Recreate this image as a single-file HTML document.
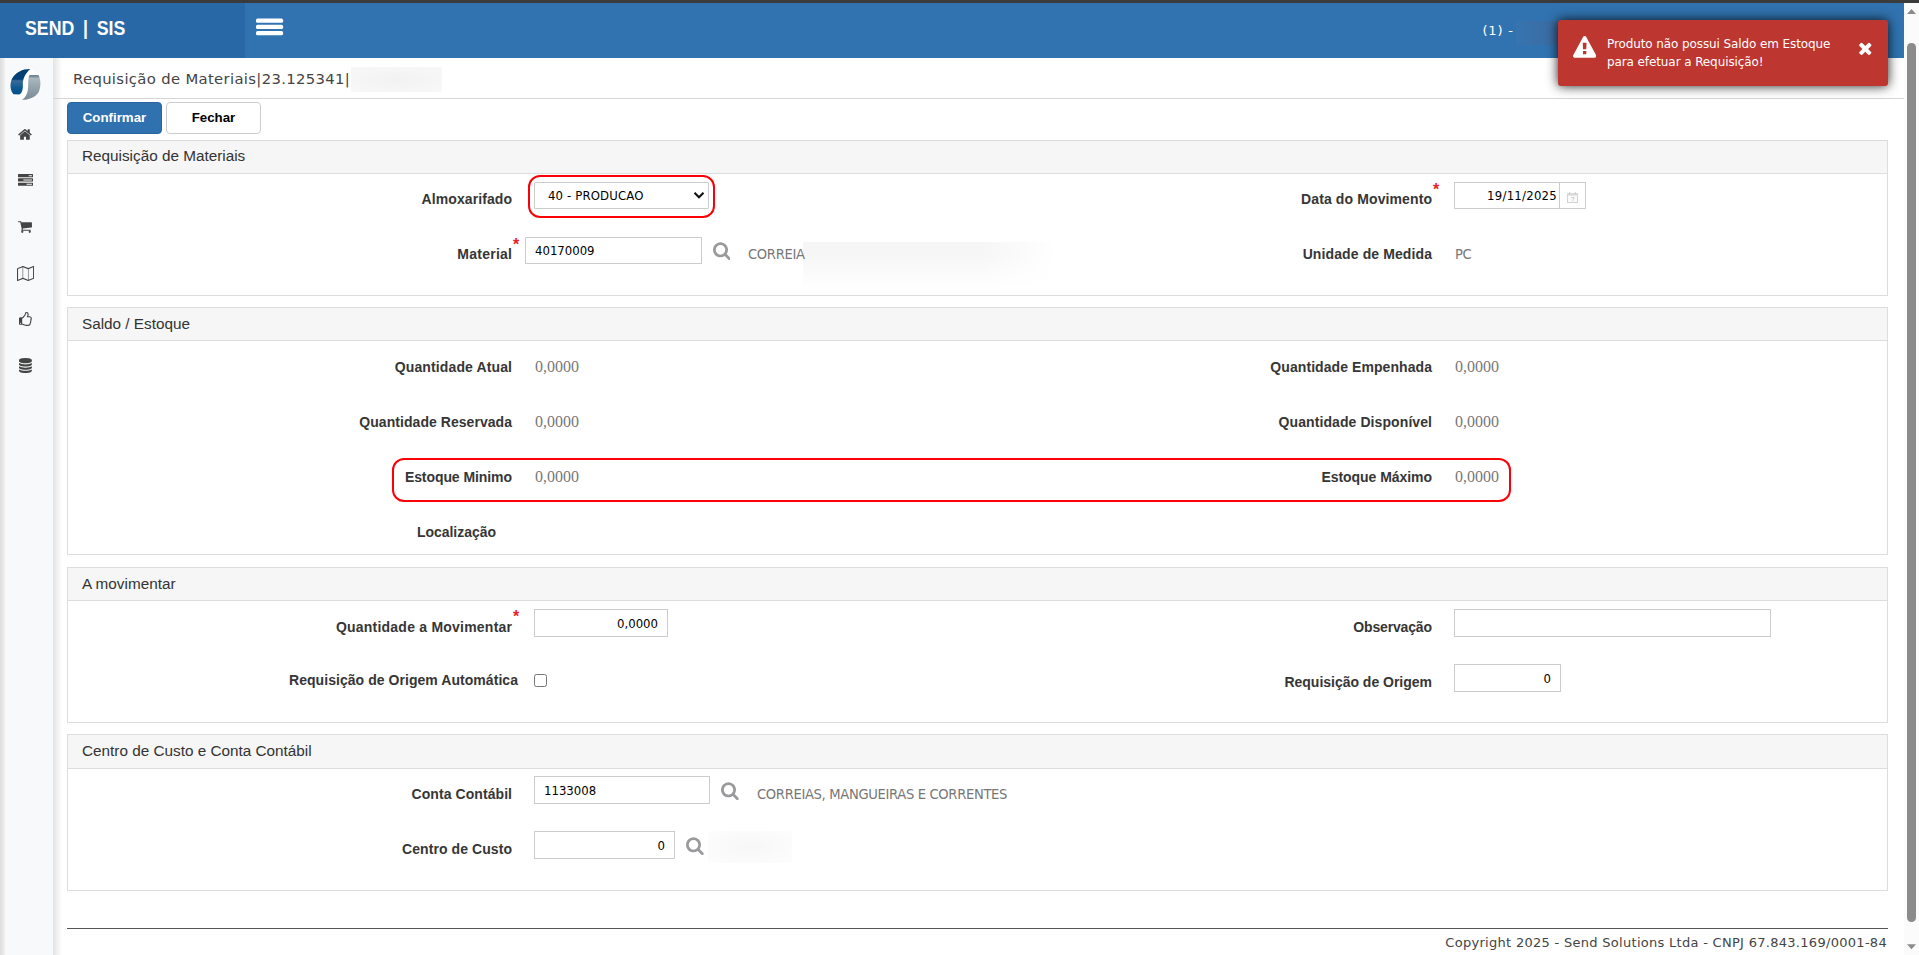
<!DOCTYPE html>
<html lang="pt-BR">
<head>
<meta charset="utf-8">
<title>SEND | SIS - Requisição de Materiais</title>
<style>
*{box-sizing:border-box;margin:0;padding:0}
html,body{width:1919px;height:955px;overflow:hidden;background:#fff;font-family:"Liberation Sans",sans-serif}
body{position:relative}
.abs{position:absolute}
#topbar{left:0;top:0;width:1919px;height:3px;background:#3b3b3b}
#hdr{left:0;top:3px;width:1904px;height:55px;background:#3173b0}
#hdr-left{left:0;top:3px;width:245px;height:55px;background:#2868a6}
#brand{left:24.5px;top:12.6px;color:#fff;font:bold 21px/30px "Liberation Sans",sans-serif;word-spacing:4.5px;white-space:nowrap;transform-origin:0 50%;transform:scaleX(.845)}
.hb{left:256px;width:27px;height:4px;background:#fff;border-radius:1px}
#user{left:1482.5px;top:22px;color:#fff;font:13px/18px "DejaVu Sans",sans-serif;letter-spacing:.8px;white-space:nowrap}
#side-shadow{left:0;top:58px;width:5px;height:897px;background:linear-gradient(90deg,#dcdcdc,#f0f0f0)}
#side{left:5px;top:58px;width:48px;height:897px;background:#f8f9fa}
#side-r{left:53px;top:58px;width:9px;height:897px;background:linear-gradient(90deg,rgba(0,0,0,.11),rgba(0,0,0,0))}
#title{left:73px;top:68px;color:#444;font:14.8px/22px "DejaVu Sans",sans-serif;letter-spacing:.345px;white-space:nowrap;transform-origin:0 50%}
#title-line{left:53px;top:98px;width:1851px;height:1px;background:#d6d6d6}
.btn{top:102px;height:32px;border-radius:4px;font:bold 13.3px/29px "Liberation Sans",sans-serif;text-align:center}
#b1{left:67px;width:95px;background:#3071b0;border:1px solid #2b66a0;color:#fff}
#b2{left:166px;width:95px;background:#fff;border:1px solid #ccc;color:#000}
.panel{left:67px;width:1821px;border:1px solid #ddd;background:#fff}
.ph{left:0;top:0;width:100%;height:33px;background:#f6f6f6;border-bottom:1px solid #ddd;color:#333;font:15.3px/30px "Liberation Sans",sans-serif;padding-left:14px;position:absolute}
.lbl{color:#363636;font:bold 14px/20px "Liberation Sans",sans-serif;white-space:nowrap;text-align:right;transform-origin:100% 50%}
.val{color:#777;font:16px/20px "Liberation Serif",serif;white-space:nowrap}
.txt{z-index:1;color:#777;letter-spacing:-.33px;font:14.6px/20px "DejaVu Sans Condensed","DejaVu Sans",sans-serif;font-stretch:condensed;white-space:nowrap;transform-origin:0 50%}
.inp{background:#fff;border:1px solid #ccc;color:#000;font:13px/28px "DejaVu Sans Condensed","DejaVu Sans",sans-serif;font-stretch:condensed;white-space:nowrap;padding:0 9px;height:28px}
.inp.r{text-align:right}
.req{color:#e8202a;font:bold 16px/16px "Liberation Sans",sans-serif}
.hl{border:2.4px solid #fb0007;border-radius:12px}
.blur{background:linear-gradient(90deg,rgba(255,255,255,0) 70%,#fff 100%),linear-gradient(180deg,#f6f6f6 30%,#fff 100%)}
#foot-line{left:67px;top:928px;width:1821px;height:1px;background:#555}
#foot{right:32px;top:934px;color:#444;font:13px/18px "DejaVu Sans",sans-serif;letter-spacing:.29px;white-space:nowrap;transform-origin:100% 50%}
#sb{left:1904px;top:3px;width:15px;height:952px;background:#fbfbfb}
#sb-thumb{left:1907px;top:43px;width:8.6px;height:878.6px;background:#8b8b8b;border-radius:4.3px}
#toast{left:1558px;top:20px;width:330px;height:65.5px;background:#bd362f;border-radius:3px;box-shadow:0 0 12px rgba(0,0,0,.88)}
#toast-msg{left:1607px;top:36px;color:#fff;font:12px/17.5px "DejaVu Sans",sans-serif;letter-spacing:-.1px;white-space:nowrap;transform-origin:0 50%}
</style>
</head>
<body>
<div id="topbar" class="abs"></div>
<div id="hdr" class="abs"></div>
<div id="hdr-left" class="abs"></div>
<div id="brand" class="abs">SEND | SIS</div>
<svg class="abs" style="left:250px;top:12px" width="40" height="30" viewBox="0 0 40 30"><g fill="#fff"><rect x="6" y="6.6" width="27.1" height="4.2" rx="1.6"/><rect x="6" y="12.85" width="27.1" height="4.2" rx="1.6"/><rect x="6" y="19.1" width="27.1" height="4.2" rx="1.6"/></g></svg>
<div id="user" class="abs">(1) -</div>
<div class="abs" style="left:1516px;top:21px;width:42px;height:24px;background:linear-gradient(90deg,#3675b0,#3a6fa8 50%,#3b6ba1)"></div>

<div id="side-shadow" class="abs"></div>
<div id="side" class="abs"></div>
<div id="side-r" class="abs"></div>

<svg class="abs" style="left:0;top:58px" width="60" height="60" viewBox="0 0 955 955">
<defs>
<linearGradient id="lgb" x1="0" y1="0" x2="0" y2="1"><stop offset="0" stop-color="#003c72"/><stop offset=".4" stop-color="#02437a"/><stop offset=".46" stop-color="#3b6a9b"/><stop offset=".75" stop-color="#0d5990"/><stop offset="1" stop-color="#06508a"/></linearGradient>
<linearGradient id="lgg" x1="0" y1="0" x2="0" y2="1"><stop offset="0" stop-color="#72848f"/><stop offset=".07" stop-color="#7d8e98"/><stop offset=".12" stop-color="#aab7be"/><stop offset=".5" stop-color="#95a4ac"/><stop offset="1" stop-color="#788a95"/></linearGradient>
</defs>
<circle cx="405" cy="420" r="252" fill="#fff"/>
<path fill="url(#lgb)" d="M480 176 C380 170 250 220 190 330 C150 420 165 520 215 578 L305 582 C350 560 368 500 364 420 C360 340 400 250 480 176Z"/>
<path fill="url(#lgg)" d="M470 272 L612 272 C650 340 660 450 615 545 C560 630 450 668 348 666 C420 620 446 540 448 440 C448 370 450 310 470 272Z"/>
</svg>
<svg class="abs" style="left:18.39px;top:127.14px" width="13.93" height="15" viewBox="0 -1536 1664 1792"><path transform="scale(1,-1)" fill="#444" d="M1408 544V64Q1408 38 1389.0 19.0Q1370 0 1344 0H960V384H704V0H320Q294 0 275.0 19.0Q256 38 256 64V544Q256 545 256.5 547.0Q257 549 257 550L832 1024L1407 550Q1408 548 1408 544ZM1631 613 1569 539Q1561 530 1548 528H1545Q1532 528 1524 535L832 1112L140 535Q128 527 116 528Q103 530 95 539L33 613Q25 623 26.0 636.5Q27 650 37 658L756 1257Q788 1283 832.0 1283.0Q876 1283 908 1257L1152 1053V1248Q1152 1262 1161.0 1271.0Q1170 1280 1184 1280H1376Q1390 1280 1399.0 1271.0Q1408 1262 1408 1248V840L1627 658Q1637 650 1638.0 636.5Q1639 623 1631 613Z"/></svg>
<svg class="abs" style="left:17.85px;top:173.14px" width="15.00" height="15" viewBox="0 -1536 1792 1792"><path transform="scale(1,-1)" fill="#444" d="M1024 128H1664V256H1024ZM640 640H1664V768H640ZM1280 1152H1664V1280H1280ZM1792 320V64Q1792 38 1773.0 19.0Q1754 0 1728 0H64Q38 0 19.0 19.0Q0 38 0 64V320Q0 346 19.0 365.0Q38 384 64 384H1728Q1754 384 1773.0 365.0Q1792 346 1792 320ZM1792 832V576Q1792 550 1773.0 531.0Q1754 512 1728 512H64Q38 512 19.0 531.0Q0 550 0 576V832Q0 858 19.0 877.0Q38 896 64 896H1728Q1754 896 1773.0 877.0Q1792 858 1792 832ZM1792 1344V1088Q1792 1062 1773.0 1043.0Q1754 1024 1728 1024H64Q38 1024 19.0 1043.0Q0 1062 0 1088V1344Q0 1370 19.0 1389.0Q38 1408 64 1408H1728Q1754 1408 1773.0 1389.0Q1792 1370 1792 1344Z"/></svg>
<svg class="abs" style="left:18.39px;top:219.14px" width="13.93" height="15" viewBox="0 -1536 1664 1792"><path transform="scale(1,-1)" fill="#444" d="M602.0 90.0Q640 52 640.0 0.0Q640 -52 602.0 -90.0Q564 -128 512.0 -128.0Q460 -128 422.0 -90.0Q384 -52 384.0 0.0Q384 52 422.0 90.0Q460 128 512.0 128.0Q564 128 602.0 90.0ZM1498.0 90.0Q1536 52 1536.0 0.0Q1536 -52 1498.0 -90.0Q1460 -128 1408.0 -128.0Q1356 -128 1318.0 -90.0Q1280 -52 1280.0 0.0Q1280 52 1318.0 90.0Q1356 128 1408.0 128.0Q1460 128 1498.0 90.0ZM1664 1088V576Q1664 552 1647.5 533.5Q1631 515 1607 512L563 390Q576 330 576 320Q576 304 552 256H1472Q1498 256 1517.0 237.0Q1536 218 1536.0 192.0Q1536 166 1517.0 147.0Q1498 128 1472 128H448Q422 128 403.0 147.0Q384 166 384 192Q384 203 392.0 223.5Q400 244 408.0 259.5Q416 275 429.5 299.5Q443 324 445 329L268 1152H64Q38 1152 19.0 1171.0Q0 1190 0.0 1216.0Q0 1242 19.0 1261.0Q38 1280 64 1280H320Q336 1280 348.5 1273.5Q361 1267 368.0 1258.0Q375 1249 381.0 1233.5Q387 1218 389.0 1207.5Q391 1197 394.5 1178.0Q398 1159 399 1152H1600Q1626 1152 1645.0 1133.0Q1664 1114 1664 1088Z"/></svg>
<svg class="abs" style="left:16.78px;top:266.14px" width="17.14" height="15" viewBox="0 -1536 2048 1792"><path transform="scale(1,-1)" fill="#444" d="M2020 1525Q2048 1505 2048 1472V64Q2048 44 2037.0 28.0Q2026 12 2008 5L1368 -251Q1344 -262 1320 -251L704 -5L88 -251Q78 -256 64 -256Q45 -256 28 -245Q0 -225 0 -192V1216Q0 1236 11.0 1252.0Q22 1268 40 1275L680 1531Q704 1542 728 1531L1344 1285L1960 1531Q1992 1544 2020 1525ZM736 1390V120L1312 -110V1160ZM128 1173V-97L672 120V1390ZM1920 107V1377L1376 1160V-110Z"/></svg>
<svg class="abs" style="left:18.92px;top:312.14px" width="12.86" height="15" viewBox="0 -1536 1536 1792"><path transform="scale(1,-1)" fill="#444" d="M237.0 147.0Q256 166 256.0 192.0Q256 218 237.0 237.0Q218 256 192.0 256.0Q166 256 147.0 237.0Q128 218 128.0 192.0Q128 166 147.0 147.0Q166 128 192.0 128.0Q218 128 237.0 147.0ZM1408 768Q1408 819 1369.0 857.5Q1330 896 1280 896H928Q928 954 976.0 1055.5Q1024 1157 1024 1216Q1024 1314 992.0 1361.0Q960 1408 864 1408Q838 1382 826.0 1323.0Q814 1264 795.5 1197.5Q777 1131 736 1088Q714 1065 659 997Q655 992 636.0 967.0Q617 942 604.5 926.0Q592 910 570.0 883.5Q548 857 530.0 839.5Q512 822 491.5 804.0Q471 786 451.5 777.0Q432 768 416 768H384V128H416Q429 128 447.5 125.0Q466 122 480.5 118.5Q495 115 518.5 107.5Q542 100 553.5 96.0Q565 92 589.0 83.5Q613 75 618 73Q829 0 960 0H1081Q1273 0 1273 167Q1273 193 1268 223Q1298 239 1315.5 275.5Q1333 312 1333.0 349.0Q1333 386 1315 418Q1368 468 1368 537Q1368 562 1358.0 592.5Q1348 623 1333 640Q1365 641 1386.5 687.0Q1408 733 1408 768ZM1536 769Q1536 680 1487 606Q1496 573 1496 537Q1496 460 1458 393Q1461 372 1461 350Q1461 249 1401 172Q1402 33 1316.0 -47.5Q1230 -128 1089 -128H1053H960Q864 -128 770.5 -105.5Q677 -83 554 -40Q438 0 416 0H128Q75 0 37.5 37.5Q0 75 0 128V768Q0 821 37.5 858.5Q75 896 128 896H402Q438 920 539 1051Q597 1126 646 1179Q670 1204 681.5 1264.5Q693 1325 712.0 1391.0Q731 1457 774 1499Q813 1536 864 1536Q948 1536 1015.0 1503.5Q1082 1471 1117.0 1402.0Q1152 1333 1152 1216Q1152 1123 1104 1024H1280Q1384 1024 1460.0 948.0Q1536 872 1536 769Z"/></svg>
<svg class="abs" style="left:18.92px;top:358.3px" width="12.86" height="15" viewBox="0 -1536 1536 1792"><path transform="scale(1,-1)" fill="#444" d="M1536 938V768Q1536 699 1433.0 640.0Q1330 581 1153.0 546.5Q976 512 768.0 512.0Q560 512 383.0 546.5Q206 581 103.0 640.0Q0 699 0 768V938Q119 854 325.0 811.0Q531 768 768.0 768.0Q1005 768 1211.0 811.0Q1417 854 1536 938ZM1536 170V0Q1536 -69 1433.0 -128.0Q1330 -187 1153.0 -221.5Q976 -256 768.0 -256.0Q560 -256 383.0 -221.5Q206 -187 103.0 -128.0Q0 -69 0 0V170Q119 86 325.0 43.0Q531 0 768.0 0.0Q1005 0 1211.0 43.0Q1417 86 1536 170ZM1536 554V384Q1536 315 1433.0 256.0Q1330 197 1153.0 162.5Q976 128 768.0 128.0Q560 128 383.0 162.5Q206 197 103.0 256.0Q0 315 0 384V554Q119 470 325.0 427.0Q531 384 768.0 384.0Q1005 384 1211.0 427.0Q1417 470 1536 554ZM1536 1280V1152Q1536 1083 1433.0 1024.0Q1330 965 1153.0 930.5Q976 896 768.0 896.0Q560 896 383.0 930.5Q206 965 103.0 1024.0Q0 1083 0 1152V1280Q0 1349 103.0 1408.0Q206 1467 383.0 1501.5Q560 1536 768.0 1536.0Q976 1536 1153.0 1501.5Q1330 1467 1433.0 1408.0Q1536 1349 1536 1280Z"/></svg>
<div id="title" class="abs">Requisição de Materiais|23.125341|</div>
<div class="abs" style="left:351px;top:67px;width:91px;height:25px;background:radial-gradient(ellipse at center,#f2f2f2 0%,#f5f5f5 50%,#f8f8f8 100%)"></div>
<div id="title-line" class="abs"></div>
<div id="b1" class="abs btn">Confirmar</div>
<div id="b2" class="abs btn">Fechar</div>

<!-- PANELS -->
<div class="abs panel" style="top:140px;height:156px"><div class="ph">Requisição de Materiais</div></div>
<div class="abs panel" style="top:307px;height:248px"><div class="ph" style="line-height:32px">Saldo / Estoque</div></div>
<div class="abs panel" style="top:567px;height:156px"><div class="ph" style="line-height:32px">A movimentar</div></div>
<div class="abs panel" style="top:734px;height:157px"><div class="ph" style="line-height:32px;height:34px">Centro de Custo e Conta Contábil</div></div>


<!-- panel 1 -->
<div class="abs lbl" style="left:0;width:512.08px;top:189px;letter-spacing:0.083px">Almoxarifado</div>
<div class="abs hl" style="left:527.6px;top:175.4px;width:187px;height:42.6px"></div>
<div class="abs inp sel" style="left:534px;top:182px;width:175px;height:27px;border-radius:1px;padding-left:13px;line-height:25px;letter-spacing:.15px">40 - PRODUCAO</div>
<svg class="abs" style="left:693px;top:191px" width="12" height="9" viewBox="0 0 12 9"><path d="M1.5 1.8 L6 6.3 L10.5 1.8" fill="none" stroke="#111" stroke-width="2.1"/></svg>
<div class="abs lbl" style="left:0;width:512.26px;top:244px;letter-spacing:0.263px">Material</div>
<div class="abs req" style="left:513px;top:237px">*</div>
<div class="abs inp" style="left:525px;top:237px;width:177px;height:27px;line-height:25px">40170009</div>
<svg class="abs" style="left:712.60px;top:240.64px" width="17.74" height="19.1" viewBox="0 -1536 1664 1792"><path transform="scale(1,-1)" fill="#9b999c" d="M1020.5 387.5Q1152 519 1152.0 704.0Q1152 889 1020.5 1020.5Q889 1152 704.0 1152.0Q519 1152 387.5 1020.5Q256 889 256.0 704.0Q256 519 387.5 387.5Q519 256 704.0 256.0Q889 256 1020.5 387.5ZM1664 -128Q1664 -180 1626.0 -218.0Q1588 -256 1536 -256Q1482 -256 1446 -218L1103 124Q924 0 704 0Q561 0 430.5 55.5Q300 111 205.5 205.5Q111 300 55.5 430.5Q0 561 0.0 704.0Q0 847 55.5 977.5Q111 1108 205.5 1202.5Q300 1297 430.5 1352.5Q561 1408 704.0 1408.0Q847 1408 977.5 1352.5Q1108 1297 1202.5 1202.5Q1297 1108 1352.5 977.5Q1408 847 1408 704Q1408 484 1284 305L1627 -38Q1664 -75 1664 -128Z"/></svg>
<div class="abs txt" style="left:748px;top:243.6px">CORREIA</div>
<div class="abs blur" style="left:803px;top:242px;width:252px;height:46px"></div>

<div class="abs lbl" style="left:0;width:1432.11px;top:189px;letter-spacing:0.112px">Data do Movimento</div>
<div class="abs req" style="left:1433px;top:182px">*</div>
<div class="abs inp r" style="left:1454px;top:182px;width:106px;height:27px;line-height:25px;letter-spacing:.25px;padding:0 2px 0 0">19/11/2025</div>
<div class="abs" style="left:1559px;top:182px;width:27px;height:27px;border:1px solid #ccc;background:#fff"></div>
<svg class="abs" style="left:1566px;top:191.5px" width="13" height="12" viewBox="0 0 13 12"><rect x="1.5" y="1.5" width="10" height="9" fill="#fafafa" stroke="#d2d2d2"/><rect x="1" y="1" width="11" height="2.6" fill="#dadada"/><rect x="3" y="0.2" width="1.4" height="2" fill="#cfcfcf"/><rect x="8.6" y="0.2" width="1.4" height="2" fill="#cfcfcf"/><path d="M5 5.6h3.2L6.4 9" fill="none" stroke="#d0d0d0" stroke-width="1"/></svg>
<div class="abs lbl" style="left:0;width:1432.11px;top:244px;letter-spacing:0.112px">Unidade de Medida</div>
<div class="abs txt" style="left:1455px;top:243.6px">PC</div>

<!-- panel 2 -->
<div class="abs lbl" style="left:0;width:512.12px;top:357px;letter-spacing:0.125px">Quantidade Atual</div>
<div class="abs val" style="left:535px;top:357px">0,0000</div>
<div class="abs lbl" style="left:0;width:512.05px;top:412px;letter-spacing:0.050px">Quantidade Reservada</div>
<div class="abs val" style="left:535px;top:412px">0,0000</div>
<div class="abs hl" style="left:391.6px;top:457.8px;width:1119.2px;height:44px"></div>
<div class="abs lbl" style="left:0;width:511.92px;top:467px;letter-spacing:-0.079px">Estoque Minimo</div>
<div class="abs val" style="left:535px;top:467px">0,0000</div>
<div class="abs lbl" style="left:0;width:495.96px;top:522px;letter-spacing:-0.036px">Localização</div>

<div class="abs lbl" style="left:0;width:1432.08px;top:357px;letter-spacing:0.075px">Quantidade Empenhada</div>
<div class="abs val" style="left:1455px;top:357px">0,0000</div>
<div class="abs lbl" style="left:0;width:1432.09px;top:412px;letter-spacing:0.086px">Quantidade Disponível</div>
<div class="abs val" style="left:1455px;top:412px">0,0000</div>
<div class="abs lbl" style="left:0;width:1431.94px;top:467px;letter-spacing:-0.057px">Estoque Máximo</div>
<div class="abs val" style="left:1455px;top:467px">0,0000</div>

<!-- panel 3 -->
<div class="abs lbl" style="left:0;width:512.23px;top:617px;letter-spacing:0.226px">Quantidade a Movimentar</div>
<div class="abs req" style="left:513px;top:609px">*</div>
<div class="abs inp r" style="left:534px;top:609px;width:134px">0,0000</div>
<div class="abs lbl" style="left:0;width:518.05px;top:670px;letter-spacing:0.052px">Requisição de Origem Automática</div>
<div class="abs" style="left:534px;top:674px;width:13px;height:13px;border:1px solid #767676;border-radius:2.5px;background:#fff"></div>

<div class="abs lbl" style="left:0;width:1431.83px;top:617px;letter-spacing:-0.170px">Observação</div>
<div class="abs inp" style="left:1454px;top:609px;width:317px"></div>
<div class="abs lbl" style="left:0;width:1431.98px;top:672px;letter-spacing:-0.015px">Requisição de Origem</div>
<div class="abs inp r" style="left:1454px;top:664px;width:107px">0</div>

<!-- panel 4 -->
<div class="abs lbl" style="left:0;width:512.07px;top:784px;letter-spacing:0.071px">Conta Contábil</div>
<div class="abs inp" style="left:534px;top:776px;width:176px">1133008</div>
<svg class="abs" style="left:721.40px;top:780.64px" width="17.74" height="19.1" viewBox="0 -1536 1664 1792"><path transform="scale(1,-1)" fill="#9b999c" d="M1020.5 387.5Q1152 519 1152.0 704.0Q1152 889 1020.5 1020.5Q889 1152 704.0 1152.0Q519 1152 387.5 1020.5Q256 889 256.0 704.0Q256 519 387.5 387.5Q519 256 704.0 256.0Q889 256 1020.5 387.5ZM1664 -128Q1664 -180 1626.0 -218.0Q1588 -256 1536 -256Q1482 -256 1446 -218L1103 124Q924 0 704 0Q561 0 430.5 55.5Q300 111 205.5 205.5Q111 300 55.5 430.5Q0 561 0.0 704.0Q0 847 55.5 977.5Q111 1108 205.5 1202.5Q300 1297 430.5 1352.5Q561 1408 704.0 1408.0Q847 1408 977.5 1352.5Q1108 1297 1202.5 1202.5Q1297 1108 1352.5 977.5Q1408 847 1408 704Q1408 484 1284 305L1627 -38Q1664 -75 1664 -128Z"/></svg>
<div class="abs txt" style="left:757px;top:784px">CORREIAS, MANGUEIRAS E CORRENTES</div>
<div class="abs lbl" style="left:0;width:512.07px;top:839px;letter-spacing:0.073px">Centro de Custo</div>
<div class="abs inp r" style="left:534px;top:831px;width:141px">0</div>
<svg class="abs" style="left:686.20px;top:835.64px" width="17.74" height="19.1" viewBox="0 -1536 1664 1792"><path transform="scale(1,-1)" fill="#9b999c" d="M1020.5 387.5Q1152 519 1152.0 704.0Q1152 889 1020.5 1020.5Q889 1152 704.0 1152.0Q519 1152 387.5 1020.5Q256 889 256.0 704.0Q256 519 387.5 387.5Q519 256 704.0 256.0Q889 256 1020.5 387.5ZM1664 -128Q1664 -180 1626.0 -218.0Q1588 -256 1536 -256Q1482 -256 1446 -218L1103 124Q924 0 704 0Q561 0 430.5 55.5Q300 111 205.5 205.5Q111 300 55.5 430.5Q0 561 0.0 704.0Q0 847 55.5 977.5Q111 1108 205.5 1202.5Q300 1297 430.5 1352.5Q561 1408 704.0 1408.0Q847 1408 977.5 1352.5Q1108 1297 1202.5 1202.5Q1297 1108 1352.5 977.5Q1408 847 1408 704Q1408 484 1284 305L1627 -38Q1664 -75 1664 -128Z"/></svg>
<div class="abs" style="left:708px;top:831px;width:84px;height:32px;background:radial-gradient(ellipse at center,#f7f7f7 0%,#fafafa 50%,#fdfdfd 100%)"></div>


<div id="foot-line" class="abs"></div>
<div id="foot" class="abs">Copyright 2025 - Send Solutions Ltda - CNPJ 67.843.169/0001-84</div>

<div id="sb" class="abs"></div>
<div id="sb-thumb" class="abs"></div>
<svg class="abs" style="left:1904px;top:3px" width="15" height="952" viewBox="0 0 15 952"><path d="M3 11 L7.5 6 L12 11Z M3 941.2 L12 941.2 L7.5 946.2Z" fill="#8b8b8b"/></svg>

<div id="toast" class="abs"></div>
<svg class="abs" style="left:1573.20px;top:35.60px" width="23.30" height="23.3" viewBox="0 -1536 1792 1792"><path transform="scale(1,-1)" fill="#fff" d="M1024 161V351Q1024 365 1014.5 374.5Q1005 384 992 384H800Q787 384 777.5 374.5Q768 365 768 351V161Q768 147 777.5 137.5Q787 128 800 128H992Q1005 128 1014.5 137.5Q1024 147 1024 161ZM1022 535 1040 994Q1040 1006 1030 1013Q1017 1024 1006 1024H786Q775 1024 762 1013Q752 1006 752 992L769 535Q769 525 779.0 518.5Q789 512 803 512H988Q1002 512 1011.5 518.5Q1021 525 1022 535ZM1008 1469 1776 61Q1811 -2 1774 -65Q1757 -94 1727.5 -111.0Q1698 -128 1664 -128H128Q94 -128 64.5 -111.0Q35 -94 18 -65Q-19 -2 16 61L784 1469Q801 1500 831.0 1518.0Q861 1536 896.0 1536.0Q931 1536 961.0 1518.0Q991 1500 1008 1469Z"/></svg>
<svg class="abs" style="left:1857.63px;top:38.54px" width="14.54" height="18.5" viewBox="0 -1536 1408 1792"><path transform="scale(1,-1)" fill="#fff" d="M1270 146 1134 10Q1106 -18 1066.0 -18.0Q1026 -18 998 10L704 304L410 10Q382 -18 342.0 -18.0Q302 -18 274 10L138 146Q110 174 110.0 214.0Q110 254 138 282L432 576L138 870Q110 898 110.0 938.0Q110 978 138 1006L274 1142Q302 1170 342.0 1170.0Q382 1170 410 1142L704 848L998 1142Q1026 1170 1066.0 1170.0Q1106 1170 1134 1142L1270 1006Q1298 978 1298.0 938.0Q1298 898 1270 870L976 576L1270 282Q1298 254 1298.0 214.0Q1298 174 1270 146Z"/></svg>
<div id="toast-msg" class="abs">Produto não possui Saldo em Estoque<br>para efetuar a Requisição!</div>
</body>
</html>
